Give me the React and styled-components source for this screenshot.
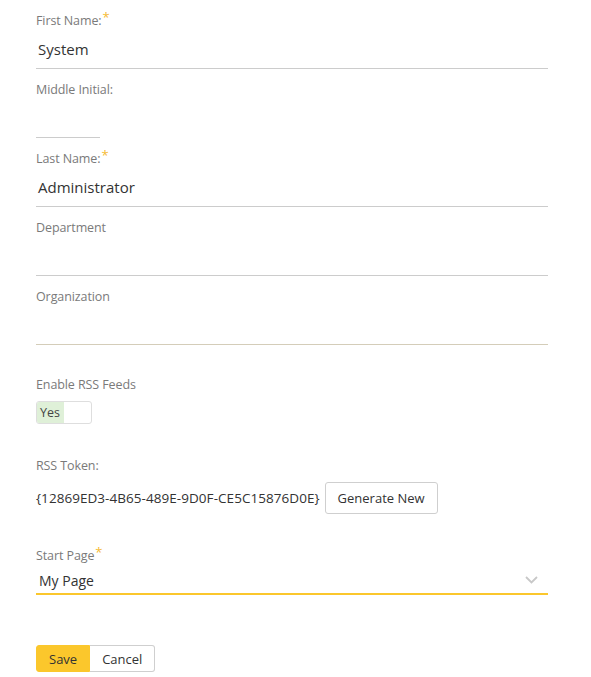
import React from "react";
import styled, { createGlobalStyle } from "styled-components";

const Global = createGlobalStyle`
  html, body { margin: 0; padding: 0; background: #fff; }
  body { font-family: "Open Sans", "Noto Sans", sans-serif; color: #333; }
  * { box-sizing: border-box; }
`;

const Form = styled.form`
  display: flex;
  flex-direction: column;
  padding: 12px 43px 0 36px;
  width: 591px;
`;

const Field = styled.div`
  display: flex;
  flex-direction: column;
  height: ${(p) => p.$h || 69}px;
`;

const Label = styled.label`
  display: block;
  height: 18px;
  font-size: 12.5px;
  line-height: 18px;
  color: #7a7a7a;
  letter-spacing: -0.1px;
`;

const Star = styled.span`
  position: relative;
  top: -3px;
  color: #f5b932;
  font-size: 13px;
  line-height: 0;
  margin-left: 1px;
`;

const Input = styled.div`
  height: 37px;
  margin-top: 2px;
  width: ${(p) => p.$w || "100%"};
  border-bottom: 1px solid ${(p) => p.$line || "#cccccc"};
  font-size: 15px;
  line-height: 34px;
  padding-left: 2px;
  color: #333;
`;

const Toggle = styled.div`
  display: flex;
  width: 56px;
  height: 23px;
  margin-top: 7px;
  border: 1px solid #dedede;
  border-radius: 3px;
  overflow: hidden;
`;

const ToggleOn = styled.span`
  width: 27px;
  background: #dff0d8;
  font-size: 12.5px;
  line-height: 21px;
  color: #444;
  padding-left: 3px;
`;

const TokenRow = styled.div`
  display: flex;
  align-items: center;
  gap: 5px;
  margin-top: 7px;
`;

const Token = styled.span`
  font-size: 13.5px;
  color: #333;
  letter-spacing: 0.05px;
`;

const Button = styled.button`
  font-family: inherit;
  font-size: 13px;
  color: #333;
  background: ${(p) => (p.$primary ? "#fbc72c" : "#fff")};
  border: 1px solid ${(p) => (p.$primary ? "#fbc72c" : "#cfcfcf")};
  border-left-width: ${(p) => (p.$joined ? 0 : 1)}px;
  height: ${(p) => p.$h || 27}px;
  padding: 0 ${(p) => p.$px || 12}px;
  border-radius: ${(p) => p.$radius || "3px"};
  cursor: pointer;
`;

const Select = styled.div`
  display: flex;
  align-items: center;
  justify-content: space-between;
  height: 30px;
  margin-top: 2px;
  border-bottom: 2px solid #fbc72c;
  padding: 0 10px 0 3px;
  font-size: 14px;
  color: #333;
`;

const ButtonGroup = styled.div`
  display: flex;
  margin-top: 50px;
`;

const Chevron = () => (
  <svg width="13" height="8" viewBox="0 0 13 8" fill="none">
    <path d="M1 1l5.5 5.5L12 1" stroke="#c8c8c8" strokeWidth="1.8" />
  </svg>
);

export default function App() {
  return (
    <>
      <Global />
      <Form>
        <Field>
          <Label>First Name:<Star>*</Star></Label>
          <Input>System</Input>
        </Field>
        <Field>
          <Label>Middle Initial:</Label>
          <Input $w="64px" />
        </Field>
        <Field>
          <Label>Last Name:<Star>*</Star></Label>
          <Input>Administrator</Input>
        </Field>
        <Field>
          <Label>Department</Label>
          <Input />
        </Field>
        <Field $h={88}>
          <Label>Organization</Label>
          <Input $line="#d4cdb9" />
        </Field>
        <Field $h={81}>
          <Label>Enable RSS Feeds</Label>
          <Toggle>
            <ToggleOn>Yes</ToggleOn>
          </Toggle>
        </Field>
        <Field $h={90}>
          <Label>RSS Token:</Label>
          <TokenRow>
            <Token>{"{12869ED3-4B65-489E-9D0F-CE5C15876D0E}"}</Token>
            <Button type="button" $h={32} $px={12}>Generate New</Button>
          </TokenRow>
        </Field>
        <Field $h={48}>
          <Label>Start Page<Star>*</Star></Label>
          <Select>
            <span>My Page</span>
            <Chevron />
          </Select>
        </Field>
        <ButtonGroup>
          <Button type="button" $primary $radius="3px 0 0 3px" $px={12}>Save</Button>
          <Button type="button" $joined $radius="0 3px 3px 0" $px={12}>Cancel</Button>
        </ButtonGroup>
      </Form>
    </>
  );
}
